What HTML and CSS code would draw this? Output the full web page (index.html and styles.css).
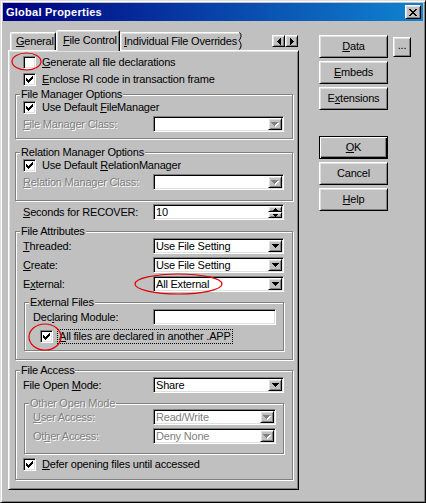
FILE: index.html
```html
<!DOCTYPE html>
<html>
<head>
<meta charset="utf-8">
<title>Global Properties</title>
<link rel="stylesheet" href="styles.css">
</head>
<body>
<div class="window">
  <div class="titlebar">
    <span class="title">Global Properties</span>
    <span class="btn3d close"><svg width="8" height="7" viewBox="0 0 8 7"><path d="M0 0h2v1H0zM6 0h2v1H6zM1 1h2v1H1zM5 1h2v1H5zM2 2h4v1H2zM3 3h2v1H3zM2 4h4v1H2zM1 5h2v1H1zM5 5h2v1H5zM0 6h2v1H0zM6 6h2v1H6z" fill="#000"/></svg></span>
  </div>
  <div class="body">
    <div class="left">
      <div class="tabstrip">
        <div class="tab"><u>G</u>eneral</div>
        <div class="tab sel"><u>F</u>ile Control</div>
        <div class="tab cut"><u>I</u>ndividual File Overrides</div>
        <svg class="squiggle" width="5" height="18" viewBox="0 0 5 18"><path d="M1.5 0.5 Q3.5 2 3 4.5 Q2.5 7 1 8.5 Q2.5 10 3 12.5 Q3.5 15 1.5 17.5" fill="none" stroke="#000" stroke-width="1"/></svg>
        <div class="tabscroll">
          <span class="btn3d sbtn"><svg width="4" height="7" viewBox="0 0 4 7"><path d="M0 3h1v1H0zM1 2h1v3H1zM2 1h1v5H2zM3 0h1v7H3z" fill="#000"/></svg></span>
          <span class="btn3d sbtn"><svg width="4" height="7" viewBox="0 0 4 7"><path d="M0 0h1v7H0zM1 1h1v5H1zM2 2h1v3H2zM3 3h1v1H3z" fill="#000"/></svg></span>
        </div>
      </div>
      <div class="panel">
        <div class="row chk-row top-row">
          <span class="cb"></span><span><u>G</u>enerate all file declarations</span>
        </div>
        <div class="row chk-row top-row">
          <span class="cb checked"><svg width="7" height="7" viewBox="0 0 7 7"><path d="M0 2h1v3H0zM1 3h1v3H1zM2 4h1v3H2zM3 3h1v3H3zM4 2h1v3H4zM5 1h1v3H5zM6 0h1v3H6z" fill="#000"/></svg></span><span><u>E</u>nclose RI code in transaction frame</span>
        </div>

        <div class="group g-fm">
          <span class="legend">File Manager Options</span>
          <div class="row chk-row grow">
            <span class="cb checked"><svg width="7" height="7" viewBox="0 0 7 7"><path d="M0 2h1v3H0zM1 3h1v3H1zM2 4h1v3H2zM3 3h1v3H3zM4 2h1v3H4zM5 1h1v3H5zM6 0h1v3H6z" fill="#000"/></svg></span><span>Use Default <u>F</u>ileManager</span>
          </div>
          <div class="row field-row grow">
            <span class="dis"><u>F</u>ile Manager Class:</span>
            <span class="combo"><span class="val"></span><span class="btn3d drop"><svg width="8" height="5" viewBox="0 0 8 5"><path d="M1 1h7v1H1zM2 2h5v1H2zM3 3h3v1H3zM4 4h1v1H4z" fill="#fff"/><path d="M0 0h7v1H0zM1 1h5v1H1zM2 2h3v1H2zM3 3h1v1H3z" fill="#808080"/></svg></span></span>
          </div>
        </div>

        <div class="group g-rm">
          <span class="legend">Relation Manager Options</span>
          <div class="row chk-row grow">
            <span class="cb checked"><svg width="7" height="7" viewBox="0 0 7 7"><path d="M0 2h1v3H0zM1 3h1v3H1zM2 4h1v3H2zM3 3h1v3H3zM4 2h1v3H4zM5 1h1v3H5zM6 0h1v3H6z" fill="#000"/></svg></span><span>Use Default <u>R</u>elationManager</span>
          </div>
          <div class="row field-row grow">
            <span class="dis"><u>R</u>elation Manager Class:</span>
            <span class="combo"><span class="val"></span><span class="btn3d drop"><svg width="8" height="5" viewBox="0 0 8 5"><path d="M1 1h7v1H1zM2 2h5v1H2zM3 3h3v1H3zM4 4h1v1H4z" fill="#fff"/><path d="M0 0h7v1H0zM1 1h5v1H1zM2 2h3v1H2zM3 3h1v1H3z" fill="#808080"/></svg></span></span>
          </div>
        </div>

        <div class="row field-row top-row r-sec">
          <span><u>S</u>econds for RECOVER:</span>
          <span class="combo"><span class="val">10</span><span class="spin"><span class="btn3d sp"><svg width="5" height="3" viewBox="0 0 5 3"><path d="M2 0h1v1H2zM1 1h3v1H1zM0 2h5v1H0z" fill="#000"/></svg></span><span class="btn3d sp"><svg width="5" height="3" viewBox="0 0 5 3"><path d="M0 0h5v1H0zM1 1h3v1H1zM2 2h1v1H2z" fill="#000"/></svg></span></span></span>
        </div>

        <div class="group g-fa">
          <span class="legend">File Attributes</span>
          <div class="row field-row grow">
            <span><u>T</u>hreaded:</span>
            <span class="combo"><span class="val">Use File Setting</span><span class="btn3d drop"><svg width="7" height="4" viewBox="0 0 7 4"><path d="M0 0h7v1H0zM1 1h5v1H1zM2 2h3v1H2zM3 3h1v1H3z" fill="#000"/></svg></span></span>
          </div>
          <div class="row field-row grow gap3">
            <span><u>C</u>reate:</span>
            <span class="combo"><span class="val">Use File Setting</span><span class="btn3d drop"><svg width="7" height="4" viewBox="0 0 7 4"><path d="M0 0h7v1H0zM1 1h5v1H1zM2 2h3v1H2zM3 3h1v1H3z" fill="#000"/></svg></span></span>
          </div>
          <div class="row field-row grow gap3">
            <span>E<u>x</u>ternal:</span>
            <span class="combo"><span class="val">All External</span><span class="btn3d drop"><svg width="7" height="4" viewBox="0 0 7 4"><path d="M0 0h7v1H0zM1 1h5v1H1zM2 2h3v1H2zM3 3h1v1H3z" fill="#000"/></svg></span></span>
          </div>
          <div class="group sub g-ext">
            <span class="legend">External Files</span>
            <div class="row field-row srow">
              <span>Dec<u>l</u>aring Module:</span>
              <span class="combo short"><span class="val"></span></span>
            </div>
            <div class="row chk-row srow sub-chk">
              <span class="cb checked"><svg width="7" height="7" viewBox="0 0 7 7"><path d="M0 2h1v3H0zM1 3h1v3H1zM2 4h1v3H2zM3 3h1v3H3zM4 2h1v3H4zM5 1h1v3H5zM6 0h1v3H6z" fill="#000"/></svg></span><span class="focus"><u>A</u>ll files are declared in another .APP</span>
            </div>
          </div>
        </div>

        <div class="group g-acc">
          <span class="legend">File Access</span>
          <div class="row field-row grow">
            <span>File Open <u>M</u>ode:</span>
            <span class="combo"><span class="val">Share</span><span class="btn3d drop"><svg width="7" height="4" viewBox="0 0 7 4"><path d="M0 0h7v1H0zM1 1h5v1H1zM2 2h3v1H2zM3 3h1v1H3z" fill="#000"/></svg></span></span>
          </div>
          <div class="group sub g-oth">
            <span class="legend dis">Other Open Mode</span>
            <div class="row field-row srow">
              <span class="dis"><u>U</u>ser Access:</span>
              <span class="combo short"><span class="val grey">Read/Write</span><span class="btn3d drop"><svg width="8" height="5" viewBox="0 0 8 5"><path d="M1 1h7v1H1zM2 2h5v1H2zM3 3h3v1H3zM4 4h1v1H4z" fill="#fff"/><path d="M0 0h7v1H0zM1 1h5v1H1zM2 2h3v1H2zM3 3h1v1H3z" fill="#808080"/></svg></span></span>
            </div>
            <div class="row field-row srow gap3">
              <span class="dis">Ot<u>h</u>er Access:</span>
              <span class="combo short"><span class="val grey">Deny None</span><span class="btn3d drop"><svg width="8" height="5" viewBox="0 0 8 5"><path d="M1 1h7v1H1zM2 2h5v1H2zM3 3h3v1H3zM4 4h1v1H4z" fill="#fff"/><path d="M0 0h7v1H0zM1 1h5v1H1zM2 2h3v1H2zM3 3h1v1H3z" fill="#808080"/></svg></span></span>
            </div>
          </div>
          <div class="row chk-row grow r-defer">
            <span class="cb checked"><svg width="7" height="7" viewBox="0 0 7 7"><path d="M0 2h1v3H0zM1 3h1v3H1zM2 4h1v3H2zM3 3h1v3H3zM4 2h1v3H4zM5 1h1v3H5zM6 0h1v3H6z" fill="#000"/></svg></span><span><u>D</u>efer opening files until accessed</span>
          </div>
        </div>
      </div>
    </div>

    <div class="right">
      <div class="btnline">
        <span class="btn3d pbtn"><u>D</u>ata</span>
        <span class="btn3d dots">...</span>
      </div>
      <span class="btn3d pbtn"><u>E</u>mbeds</span>
      <span class="btn3d pbtn">E<u>x</u>tensions</span>
      <span class="btn3d pbtn default ok"><u>O</u>K</span>
      <span class="btn3d pbtn">Cancel</span>
      <span class="btn3d pbtn"><u>H</u>elp</span>
    </div>
  </div>

  <svg class="marks" width="426" height="503" viewBox="0 0 426 503">
    <ellipse cx="26.5" cy="61.5" rx="14.5" ry="8.5" fill="none" stroke="#e00000" stroke-width="1.2"/>
    <ellipse cx="178.5" cy="284" rx="43.5" ry="10" fill="none" stroke="#e00000" stroke-width="1.2"/>
    <ellipse cx="45" cy="337" rx="16" ry="13" fill="none" stroke="#e00000" stroke-width="1.2"/>
  </svg>
</div>
</body>
</html>
```

FILE: styles.css
```css
* { box-sizing: border-box; }
html, body { margin: 0; padding: 0; }
body {
  background: #c0c0c0;
  font-family: "Liberation Sans", Arial, sans-serif;
  font-size: 11px;
  letter-spacing: -0.2px;
  line-height: 13px;
  color: #000;
}
u { text-decoration: underline; text-underline-offset: 1px; }

.window {
  position: relative;
  width: 426px;
  height: 503px;
  background: #c0c0c0;
  border: 1px solid;
  border-color: #dfdfdf #000 #000 #dfdfdf;
  box-shadow: inset 1px 1px #fff, inset -1px -1px #808080;
  padding: 2px;
}

.titlebar {
  height: 18px;
  background: linear-gradient(to right, #000080, #1084d0);
  display: flex;
  align-items: center;
  justify-content: space-between;
  padding: 0 2px 0 3px;
}
.title { color: #fff; font-weight: bold; letter-spacing: 0.25px; }

.btn3d {
  display: flex;
  align-items: center;
  justify-content: center;
  background: #c0c0c0;
  border: 1px solid;
  border-color: #fff #000 #000 #fff;
  box-shadow: inset 1px 1px #dfdfdf, inset -1px -1px #808080;
}
.close { width: 16px; height: 14px; }

.body {
  display: flex;
  gap: 20px;
  padding: 9px 0 0 5px;
}

.left { width: 291px; display: flex; flex-direction: column; }

.tabstrip {
  height: 20px;
  display: flex;
  align-items: flex-end;
  padding-left: 2px;
}
.tab {
  height: 18px;
  padding: 2px 5px 0 5px;
  border: 1px solid;
  border-bottom: none;
  border-color: #fff #000 transparent #fff;
  box-shadow: inset 1px 1px #dfdfdf, inset -1px 0 #808080;
  border-radius: 2px 2px 0 0;
  white-space: nowrap;
}
.tab:first-child { width: 46px; }
.tab.sel {
  position: relative;
  z-index: 2;
  width: 64px;
  height: 21px;
  margin-bottom: -1px;
  padding: 3px 5px 0 6px;
  background: #c0c0c0;
}
.tab.cut {
  width: 119px;
  overflow: hidden;
  border-right: none;
  box-shadow: inset 1px 1px #dfdfdf;
  border-radius: 2px 0 0 0;
  padding-left: 3px;
}
.squiggle { align-self: flex-end; margin-left: -1px; }
.tabscroll {
  margin-left: auto;
  margin-right: 1px;
  align-self: flex-start;
  margin-top: 5px;
  display: flex;
}
.sbtn { width: 13px; height: 12px; }

.panel {
  height: 440px;
  border: 1px solid;
  border-color: #fff #000 #000 #fff;
  box-shadow: inset 1px 1px #dfdfdf, inset -1px -1px #808080;
  padding: 3px 5px 0 6px;
  display: flex;
  flex-direction: column;
}

.row { display: flex; align-items: center; white-space: nowrap; flex: none; }
.chk-row { height: 17px; gap: 6px; }
.field-row { height: 16px; }
.top-row { padding: 0 9px 0 8px; }
.grow { padding: 0 8px 0 7px; }
.srow { padding: 0 7px 0 8px; }
.sub-chk { padding-left: 15px; gap: 5px; margin-top: 3px; }
.gap3 { margin-top: 3px; }

.cb {
  width: 13px;
  height: 13px;
  flex: none;
  background: #fff;
  border: 1px solid;
  border-color: #808080 #fff #fff #808080;
  box-shadow: inset 1px 1px #000, inset -1px -1px #dfdfdf;
  display: flex;
  align-items: center;
  justify-content: center;
}

.dis { color: #808080; text-shadow: 1px 1px 0 #fff; }
.grey { color: #808080; }

.combo {
  margin-left: auto;
  width: 131px;
  height: 16px;
  flex: none;
  background: #fff;
  border: 1px solid;
  border-color: #808080 #fff #fff #808080;
  box-shadow: inset 1px 1px #000, inset -1px -1px #dfdfdf;
  padding: 1px 1px 1px 2px;
  display: flex;
  align-items: center;
}
.combo.short { width: 123px; }
.val { flex: 1; }
.drop { width: 14px; height: 12px; flex: none; }
.spin { display: flex; flex-direction: column; width: 14px; height: 12px; flex: none; }
.sp { height: 6px; width: 14px; }

.group {
  position: relative;
  flex: none;
  border: 1px solid #808080;
  box-shadow: inset 1px 1px #fff, 1px 1px #fff;
}
.legend {
  position: absolute;
  top: -7px;
  left: 4px;
  padding: 0 1px;
  background: #c0c0c0;
  line-height: 13px;
  white-space: nowrap;
}
.sub { margin: 10px 8px 0 8px; }

.g-fm { margin-top: 6px; padding: 4px 0 6px; }
.g-rm { margin-top: 13px; padding: 4px 0 10px; }
.r-sec { margin-top: 3px; }
.g-fa { margin-top: 11px; padding: 6px 0 8px; }
.g-ext { padding: 6px 0 5px; }
.g-acc { margin-top: 10px; padding: 6px 0 6px; }
.g-oth { padding: 5px 0 9px; }
.r-defer { margin-top: 2px; }

.focus { outline: 1px dotted #000; outline-offset: 0; padding: 0 1px; }

.right {
  display: flex;
  flex-direction: column;
  gap: 3px;
  padding-top: 5px;
}
.btnline { display: flex; gap: 5px; align-items: flex-start; }
.pbtn { width: 69px; height: 23px; }
.dots { width: 18px; height: 20px; margin-top: 2px; padding-bottom: 3px; }
.ok { margin-top: 23px; }
.default {
  border: 1px solid #000;
  box-shadow: inset 1px 1px #fff, inset -1px -1px #000, inset -2px -2px #808080;
}

.marks {
  position: absolute;
  left: -1px;
  top: -1px;
  pointer-events: none;
}
```
